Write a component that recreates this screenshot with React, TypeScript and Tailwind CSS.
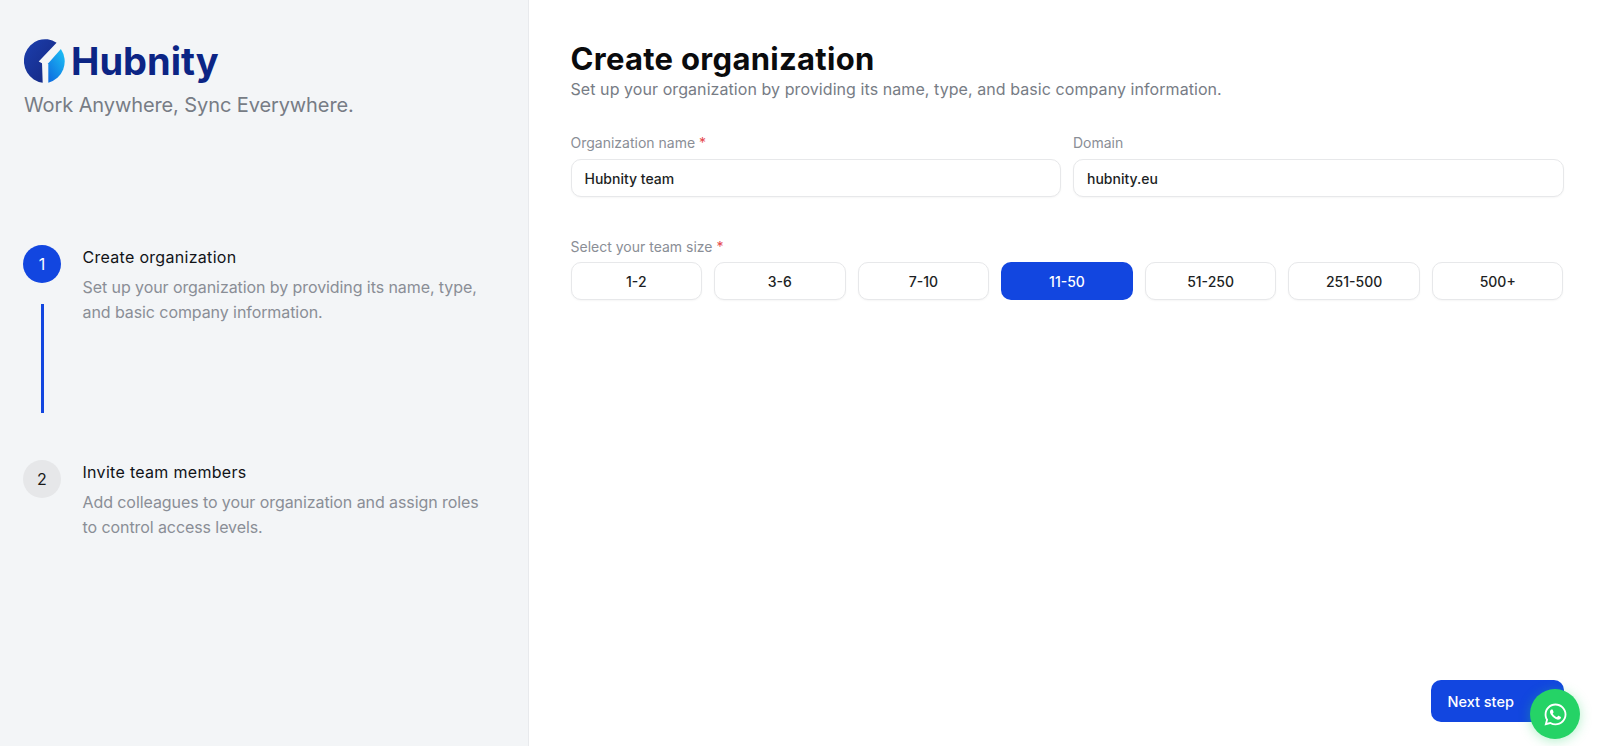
import React, { useState } from 'react';
import { FaWhatsapp } from 'react-icons/fa';

const teamSizes = ['1-2', '3-6', '7-10', '11-50', '51-250', '251-500', '500+'];

const steps = [
  {
    id: 1,
    title: 'Create organization',
    lines: ['Set up your organization by providing its name, type,', 'and basic company information.'],
  },
  {
    id: 2,
    title: 'Invite team members',
    lines: ['Add colleagues to your organization and assign roles', 'to control access levels.'],
  },
];

const Logo = () => (
  <svg viewBox="25 22 127 133" className="h-[44px] w-[43px] shrink-0">
    <defs>
      <linearGradient id="hubDark" x1="0" y1="0" x2="1" y2="1">
        <stop offset="0" stopColor="#1c3fae" />
        <stop offset="1" stopColor="#14267f" />
      </linearGradient>
      <linearGradient id="hubLight" x1="0.9" y1="0" x2="0.2" y2="1">
        <stop offset="0" stopColor="#1cc0f5" />
        <stop offset="1" stopColor="#0f6fe0" />
      </linearGradient>
    </defs>
    <path d="M122 33 A64 66 0 1 0 80 154 L78 95 L68 90 Z" fill="url(#hubDark)" />
    <path d="M135 52 A64 66 0 0 1 97 154 L97 95 Z" fill="url(#hubLight)" />
  </svg>
);

const Sidebar = () => (
  <aside className="flex h-full w-[529px] shrink-0 flex-col border-r border-[#e8eaed] bg-[#f3f5f7] pl-[24px]">
    <div className="mt-[38px] flex items-center">
      <Logo />
      <span className="ml-[4px] text-[38px] font-bold leading-[46px] text-[#0c2585]">Hubnity</span>
    </div>
    <p className="mt-[6px] text-[20px] leading-[30px] tracking-[-0.1px] text-[#777c85]">Work Anywhere, Sync Everywhere.</p>

    <div className="-ml-[1px] mt-[125px] flex flex-col">
      {steps.map((step, index) => (
        <div key={step.id} className="flex gap-[21.5px]">
          <div className="flex w-[38px] shrink-0 flex-col items-center">
            <div
              className={
                index === 0
                  ? 'flex h-[38px] w-[38px] items-center justify-center rounded-full bg-[#1246e0] text-[16px] text-white'
                  : 'flex h-[38px] w-[38px] items-center justify-center rounded-full bg-[#e6e7e9] text-[16px] text-[#1a1a1a]'
              }
            >
              {step.id}
            </div>
            {index === 0 && <div className="mb-[47px] mt-[21px] h-[109px] w-[3px] bg-[#1246e0]" />}
          </div>
          <div>
            <h3 className="text-[16px] font-normal leading-[24px] tracking-[0.3px] text-[#111318]">{step.title}</h3>
            <p className="mt-[6px] text-[16px] leading-[25px] tracking-[-0.08px] text-[#8a8e96]">
              {step.lines[0]}
              <br />
              {step.lines[1]}
            </p>
          </div>
        </div>
      ))}
    </div>
  </aside>
);

const Field = ({ label, value, required }: { label: string; value: string; required?: boolean }) => (
  <label className="block flex-1">
    <span className="block text-[14px] leading-[20px] text-[#8a8e96]">
      {label}
      {required && <span className="text-[#e5484d]"> *</span>}
    </span>
    <input
      readOnly
      value={value}
      className="mt-[6px] h-[38px] w-full rounded-[10px] border border-[#e7e8ea] bg-white px-[13px] text-[14px] font-medium text-[#1d1f24] shadow-[0_1px_2px_rgba(0,0,0,0.04)] outline-none"
    />
  </label>
);

export default function App() {
  const [teamSize, setTeamSize] = useState('11-50');

  return (
    <div className="flex h-screen w-full overflow-hidden bg-white font-['Inter',sans-serif]">
      <Sidebar />

      <main className="flex min-w-0 flex-1 flex-col pb-[24px] pl-[41.5px] pr-[36.5px] pt-[39px]">
        <h1 className="text-[31px] font-bold leading-[40px] tracking-[0.3px] text-[#0a0b0d]">Create organization</h1>
        <p className="text-[16px] leading-[20px] tracking-[0.07px] text-[#777c85]">
          Set up your organization by providing its name, type, and basic company information.
        </p>

        <div className="mt-[34px] flex gap-[12px]">
          <Field label="Organization name" value="Hubnity team" required />
          <Field label="Domain" value="hubnity.eu" />
        </div>

        <div className="mt-[40px]">
          <span className="block text-[14px] leading-[20px] text-[#8a8e96]">
            Select your team size<span className="text-[#e5484d]"> *</span>
          </span>
          <div className="mt-[5px] grid grid-cols-7 gap-[12px]">
            {teamSizes.map((size) => (
              <button
                key={size}
                onClick={() => setTeamSize(size)}
                className={
                  size === teamSize
                    ? 'h-[38px] rounded-[10px] bg-[#1246e0] text-[14px] font-medium text-white'
                    : 'h-[38px] rounded-[10px] border border-[#e7e8ea] bg-white text-[14px] font-medium text-[#1d1f24] shadow-[0_1px_2px_rgba(0,0,0,0.04)]'
                }
              >
                {size}
              </button>
            ))}
          </div>
        </div>

        <div className="mt-auto flex justify-end">
          <button className="h-[42px] w-[133px] rounded-[10px] bg-[#1246e0] pl-[17px] pt-[1px] text-left text-[14.5px] font-medium text-white">
            Next step
          </button>
        </div>
      </main>

      <button className="fixed bottom-[7px] right-[20px] flex h-[50px] w-[50px] items-center justify-center rounded-full bg-[#25d366] text-white shadow-[0_2px_12px_rgba(37,211,102,0.35)]">
        <FaWhatsapp className="h-[25px] w-[25px]" />
      </button>
    </div>
  );
}
